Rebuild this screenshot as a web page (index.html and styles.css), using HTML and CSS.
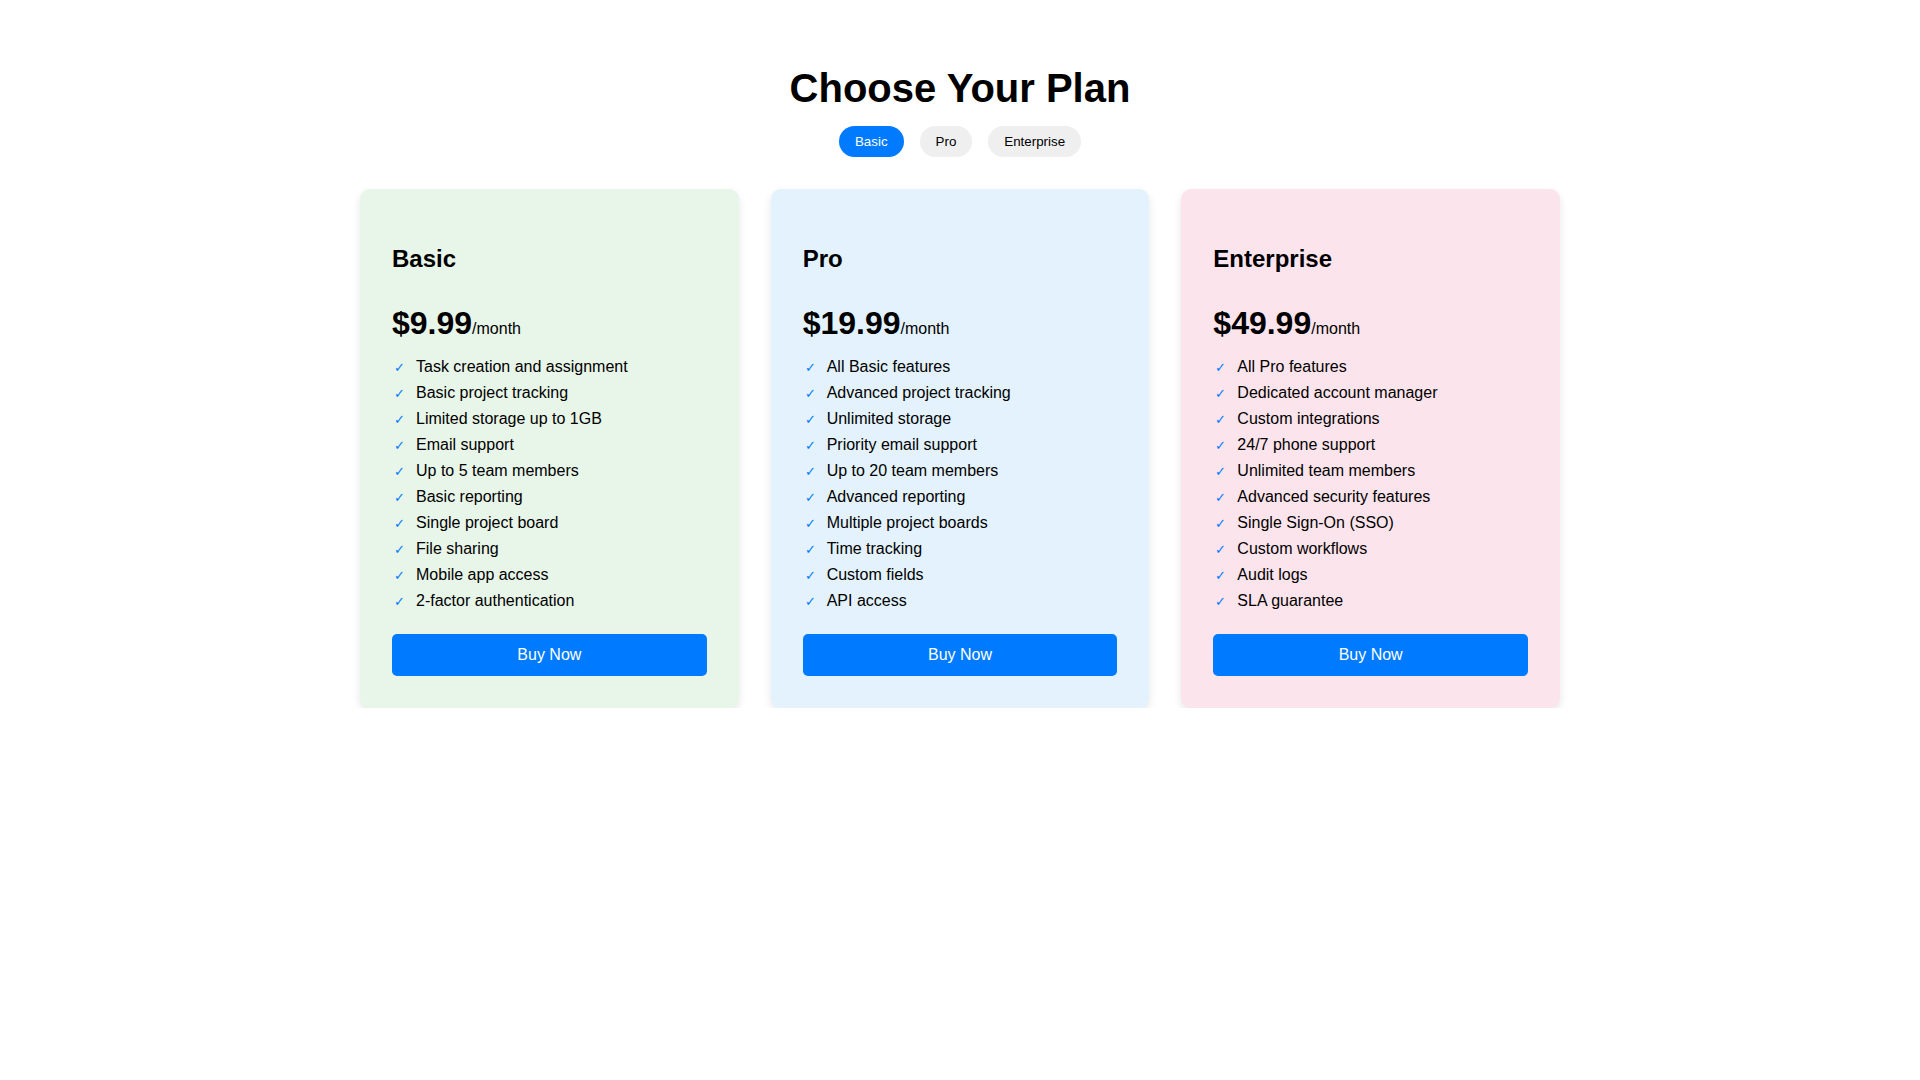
FILE: index.html
```html
<!DOCTYPE html>
<html lang="en">
<head>
<meta charset="utf-8">
<title>Choose Your Plan</title>
<link rel="stylesheet" href="styles.css">
</head>
<body>
<main class="page">
  <h1 class="title">Choose Your Plan</h1>
  <div class="tabs">
    <button class="tab active">Basic</button>
    <button class="tab">Pro</button>
    <button class="tab">Enterprise</button>
  </div>
  <div class="plans">
    <section class="card card-basic">
      <h3 class="plan-name">Basic</h3>
      <p class="price">$9.99<span class="per">/month</span></p>
      <ul class="features">
        <li><span class="check">✓</span>Task creation and assignment</li>
        <li><span class="check">✓</span>Basic project tracking</li>
        <li><span class="check">✓</span>Limited storage up to 1GB</li>
        <li><span class="check">✓</span>Email support</li>
        <li><span class="check">✓</span>Up to 5 team members</li>
        <li><span class="check">✓</span>Basic reporting</li>
        <li><span class="check">✓</span>Single project board</li>
        <li><span class="check">✓</span>File sharing</li>
        <li><span class="check">✓</span>Mobile app access</li>
        <li><span class="check">✓</span>2-factor authentication</li>
      </ul>
      <button class="buy">Buy Now</button>
    </section>
    <section class="card card-pro">
      <h3 class="plan-name">Pro</h3>
      <p class="price">$19.99<span class="per">/month</span></p>
      <ul class="features">
        <li><span class="check">✓</span>All Basic features</li>
        <li><span class="check">✓</span>Advanced project tracking</li>
        <li><span class="check">✓</span>Unlimited storage</li>
        <li><span class="check">✓</span>Priority email support</li>
        <li><span class="check">✓</span>Up to 20 team members</li>
        <li><span class="check">✓</span>Advanced reporting</li>
        <li><span class="check">✓</span>Multiple project boards</li>
        <li><span class="check">✓</span>Time tracking</li>
        <li><span class="check">✓</span>Custom fields</li>
        <li><span class="check">✓</span>API access</li>
      </ul>
      <button class="buy">Buy Now</button>
    </section>
    <section class="card card-enterprise">
      <h3 class="plan-name">Enterprise</h3>
      <p class="price">$49.99<span class="per">/month</span></p>
      <ul class="features">
        <li><span class="check">✓</span>All Pro features</li>
        <li><span class="check">✓</span>Dedicated account manager</li>
        <li><span class="check">✓</span>Custom integrations</li>
        <li><span class="check">✓</span>24/7 phone support</li>
        <li><span class="check">✓</span>Unlimited team members</li>
        <li><span class="check">✓</span>Advanced security features</li>
        <li><span class="check">✓</span>Single Sign-On (SSO)</li>
        <li><span class="check">✓</span>Custom workflows</li>
        <li><span class="check">✓</span>Audit logs</li>
        <li><span class="check">✓</span>SLA guarantee</li>
      </ul>
      <button class="buy">Buy Now</button>
    </section>
  </div>
</main>
</body>
</html>
```
FILE: styles.css
```css
html, body {
  margin: 0;
  padding: 0;
  background: #ffffff;
}
body {
  font-family: "Liberation Sans", Arial, sans-serif;
  color: #000;
}
.page {
  width: 1200px;
  margin: 0 auto;
  padding-top: 66px;
  display: flex;
  flex-direction: column;
  align-items: center;
}
.title {
  margin: 0 0 15px;
  font-size: 40px;
  font-weight: bold;
}
.tabs {
  display: flex;
  gap: 16px;
  justify-content: center;
}
.tab {
  font-family: "Liberation Sans", Arial, sans-serif;
  font-size: 13.333px;
  padding: 8px 16px;
  border: none;
  border-radius: 20px;
  background: #efefef;
  color: #000;
  cursor: pointer;
}
.tab.active {
  background: #007bff;
  color: #fff;
}
.plans {
  margin-top: 32px;
  width: 100%;
  display: grid;
  grid-template-columns: repeat(3, 1fr);
  gap: 32px;
}
.card {
  border-radius: 10px;
  padding: 32px;
  box-shadow: 0 4px 8px rgba(0, 0, 0, 0.1);
}
.card-basic { background: #e8f5e9; }
.card-pro { background: #e3f2fd; }
.card-enterprise { background: #fce4ec; }
.plan-name {
  margin: 24px 0 32px;
  font-size: 24px;
  font-weight: bold;
}
.price {
  margin: 0 0 12px;
  font-size: 32px;
  font-weight: bold;
}
.per {
  font-size: 16px;
  font-weight: normal;
}
.features {
  list-style: none;
  margin: 0 0 20px;
  padding: 0;
  font-size: 16px;
}
.features li {
  height: 26px;
  line-height: 26px;
}
.check {
  display: inline-block;
  width: 24px;
  color: #007bff;
  font-size: 13px;
  line-height: 1;
  padding-left: 2px;
  box-sizing: border-box;
}
.buy {
  display: block;
  width: 100%;
  padding: 12px;
  border: none;
  border-radius: 5px;
  background: #007bff;
  color: #fff;
  font-family: "Liberation Sans", Arial, sans-serif;
  font-size: 16px;
  cursor: pointer;
}
```
